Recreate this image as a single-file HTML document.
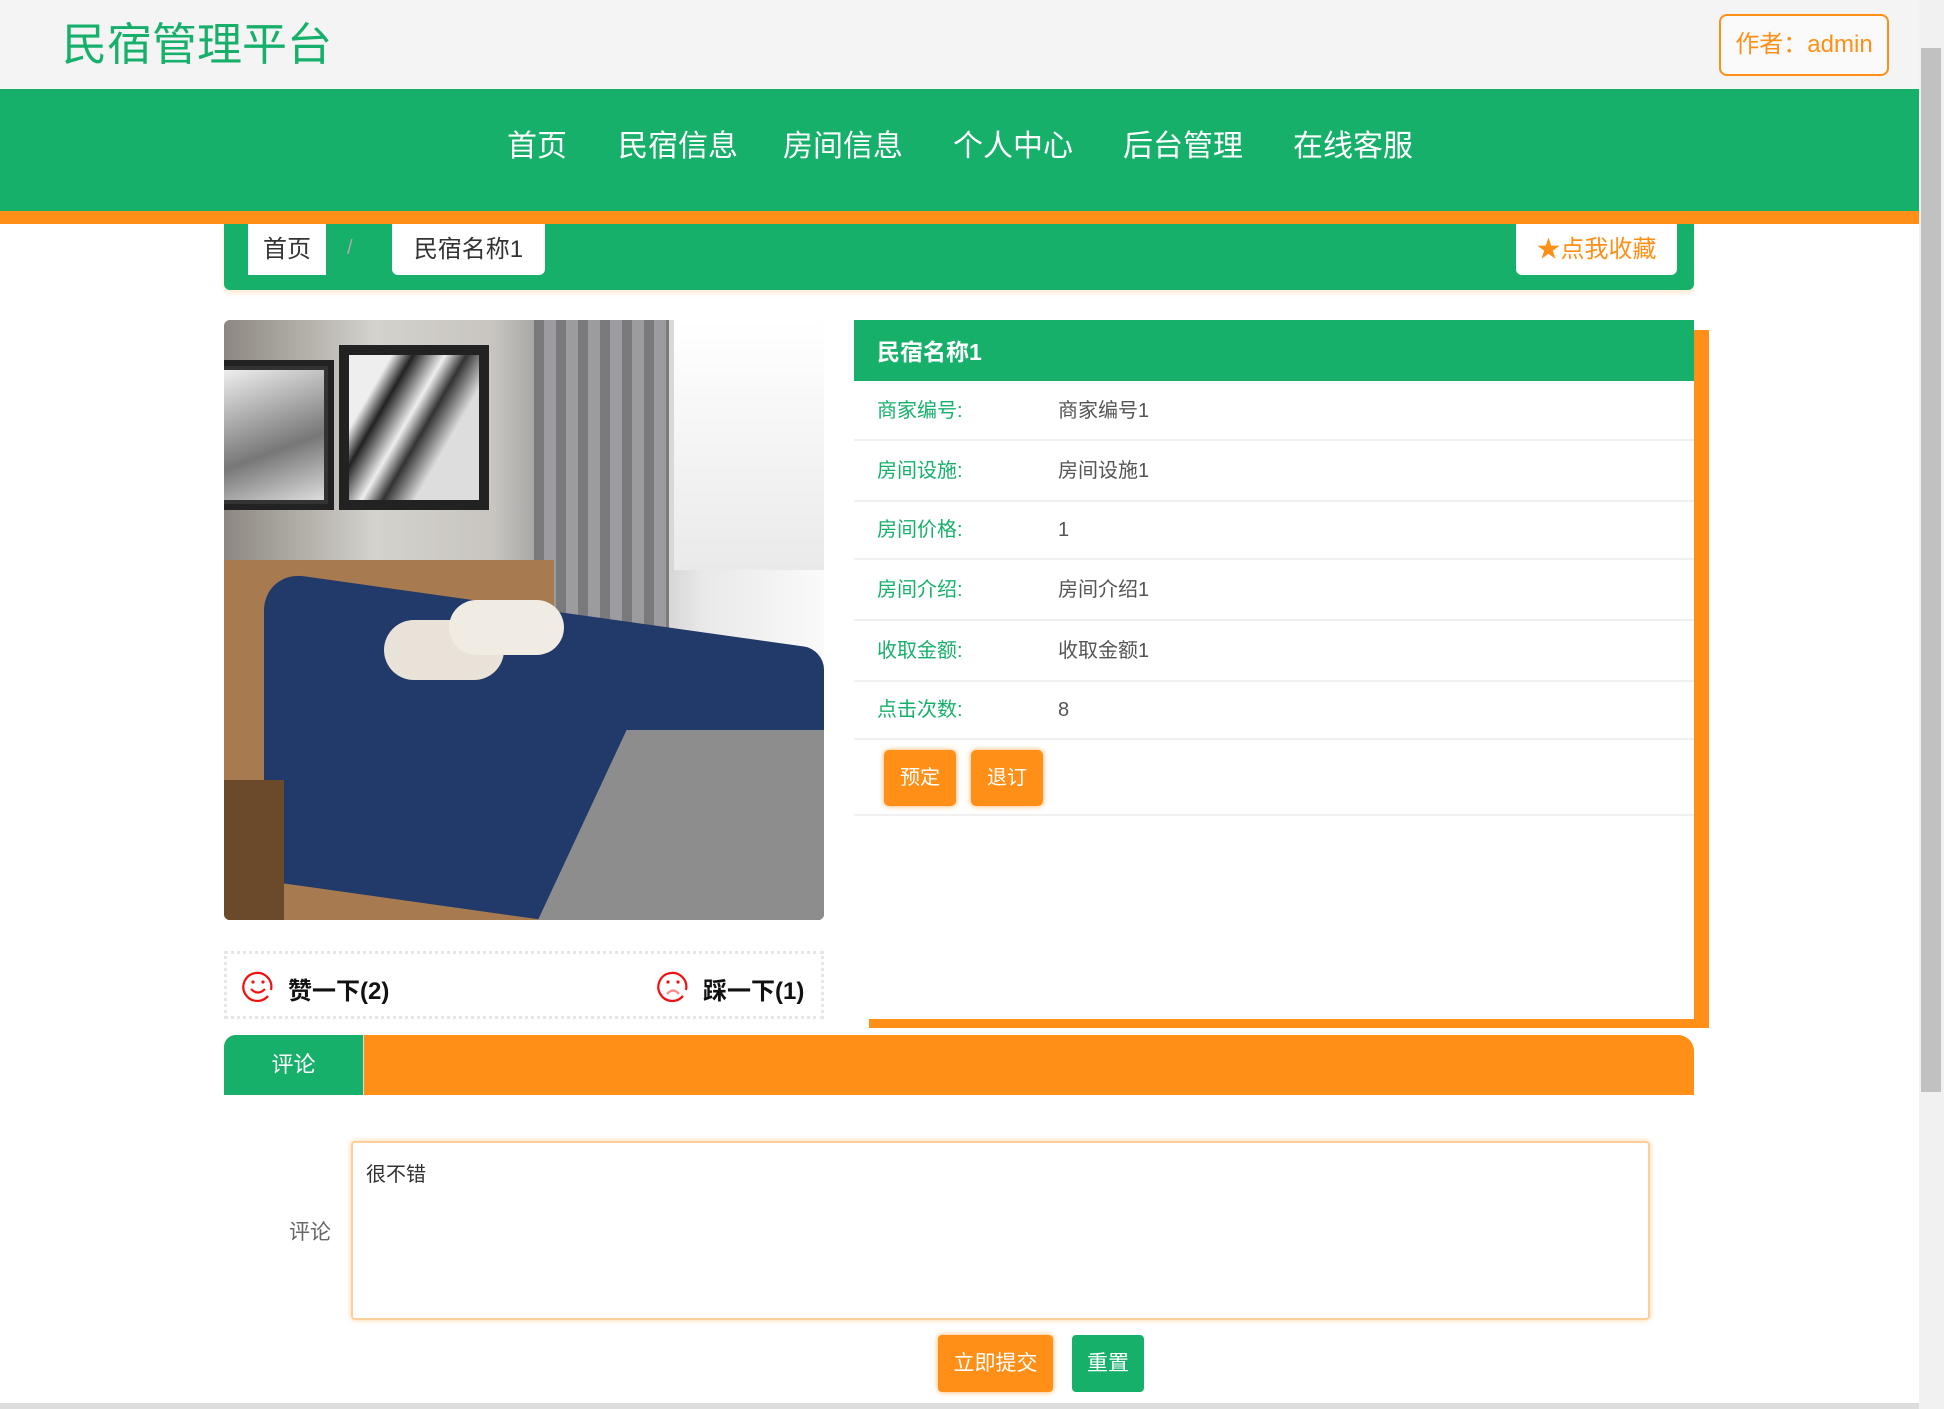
<!DOCTYPE html>
<html><head><meta charset="utf-8"><style>
*{margin:0;padding:0;box-sizing:border-box}
body{width:1944px;height:1409px;overflow:hidden;background:#fff;font-family:"Liberation Sans","Noto Sans CJK SC",sans-serif;position:relative}
.a{position:absolute}
.g{background:#17b06b}.o{background:#ff8f16}
.r span{line-height:24px}
</style></head><body>
<div class="a" style="left:0;top:0;width:1919px;height:89px;background:#f4f4f4"></div>
<div class="a" style="left:62px;top:16px;font-size:45px;color:#17b06b;line-height:58px">民宿管理平台</div>
<div class="a" style="left:1719px;top:14px;width:170px;height:62px;border:2px solid #ff8f16;border-radius:8px;color:#ff8f16;font-size:24px;line-height:58px;text-align:center;background:#fafafa">作者：admin</div>
<div class="a g" style="left:0;top:89px;width:1919px;height:122px"></div>
<div class="a o" style="left:0;top:211px;width:1919px;height:13px"></div>
<div class="a" style="left:507px;top:125px;font-size:30px;color:#fff;line-height:44px;white-space:nowrap">
<span style="margin-right:51px">首页</span><span style="margin-right:45px">民宿信息</span><span style="margin-right:50px">房间信息</span><span style="margin-right:50px">个人中心</span><span style="margin-right:50px">后台管理</span><span>在线客服</span></div>
<div class="a" style="left:1919px;top:0;width:25px;height:1409px;background:#f1f1f1"></div>
<div class="a" style="left:1921px;top:48px;width:20px;height:1044px;background:#c1c1c1"></div>
<div class="a" style="left:0;top:1403px;width:1919px;height:6px;background:#ddd"></div>
<div class="a g" style="left:224px;top:224px;width:1470px;height:66px;border-radius:0 0 6px 6px;box-shadow:0 3px 6px rgba(255,140,20,.2)"></div>
<div class="a" style="left:248px;top:224px;width:78px;height:51px;background:#fff;font-size:24px;line-height:51px;text-align:center;color:#333">首页</div>
<div class="a" style="left:347px;top:237px;color:#aaa;font-size:20px">/</div>
<div class="a" style="left:392px;top:224px;width:153px;height:51px;background:#fff;border-radius:0 0 6px 6px;font-size:24px;line-height:51px;text-align:center;color:#333">民宿名称1</div>
<div class="a" style="left:1516px;top:224px;width:161px;height:51px;background:#fff;border-radius:0 0 6px 6px;font-size:24px;line-height:51px;text-align:center;color:#ff8f16">★点我收藏</div>
<div class="a" style="left:224px;top:320px;width:600px;height:600px;border-radius:6px;overflow:hidden;background:#c9c6c0">
<div class="a" style="left:0;top:0;width:600px;height:600px;background:linear-gradient(90deg,#8c8780 0%,#d4d2cd 25%,#c8c5c0 45%,#9a9a9a 55%,#e9e9e9 80%,#fafafa 100%)"></div>
<div class="a" style="left:-10px;top:40px;width:120px;height:150px;background:#333;border:6px solid #222"></div>
<div class="a" style="left:0;top:50px;width:100px;height:130px;background:linear-gradient(160deg,#eee,#777 60%,#ddd)"></div>
<div class="a" style="left:115px;top:25px;width:150px;height:165px;background:#222"></div>
<div class="a" style="left:125px;top:35px;width:130px;height:145px;background:linear-gradient(120deg,#eee 20%,#222 30%,#eee 45%,#333 55%,#ddd 70%)"></div>
<div class="a" style="left:310px;top:0;width:135px;height:420px;background:repeating-linear-gradient(90deg,#7a7a7c 0 10px,#9c9ca0 10px 22px)"></div>
<div class="a" style="left:450px;top:0;width:150px;height:250px;background:linear-gradient(180deg,#fff,#eaeaea)"></div>
<div class="a" style="left:0;top:240px;width:330px;height:360px;background:#a87a50"></div>
<div class="a" style="left:40px;top:290px;width:560px;height:310px;background:#223a6a;border-radius:40px 20px 0 0;transform:skewY(8deg)"></div>
<div class="a" style="left:160px;top:300px;width:120px;height:60px;background:#e8e2d8;border-radius:30px"></div>
<div class="a" style="left:225px;top:280px;width:115px;height:55px;background:#f0ebe3;border-radius:30px"></div>
<div class="a" style="left:300px;top:410px;width:320px;height:220px;background:#8d8d8d;transform:skewX(-25deg);transform-origin:bottom"></div>
<div class="a" style="left:0;top:460px;width:60px;height:140px;background:#6b4a2c"></div>
</div>
<div class="a o" style="left:869px;top:330px;width:840px;height:698px"></div>
<div class="a" style="left:854px;top:320px;width:840px;height:699px;background:#fff"></div>
<div class="a g" style="left:854px;top:320px;width:840px;height:61px"></div>
<div class="a" style="left:877px;top:320px;color:#fff;font-size:23px;font-weight:bold;line-height:64px">民宿名称1</div>
<div class="a r" style="left:854px;top:381px;width:840px;font-size:20px">
<div style="height:60px;border-bottom:2px solid #f0f0f0;position:relative"><span class="a" style="left:23px;top:18px;color:#17b06b">商家编号:</span><span class="a" style="left:204px;top:18px;color:#555">商家编号1</span></div>
<div style="height:61px;border-bottom:2px solid #f0f0f0;position:relative"><span class="a" style="left:23px;top:18px;color:#17b06b">房间设施:</span><span class="a" style="left:204px;top:18px;color:#555">房间设施1</span></div>
<div style="height:58px;border-bottom:2px solid #f0f0f0;position:relative"><span class="a" style="left:23px;top:16px;color:#17b06b">房间价格:</span><span class="a" style="left:204px;top:16px;color:#555">1</span></div>
<div style="height:61px;border-bottom:2px solid #f0f0f0;position:relative"><span class="a" style="left:23px;top:18px;color:#17b06b">房间介绍:</span><span class="a" style="left:204px;top:18px;color:#555">房间介绍1</span></div>
<div style="height:61px;border-bottom:2px solid #f0f0f0;position:relative"><span class="a" style="left:23px;top:18px;color:#17b06b">收取金额:</span><span class="a" style="left:204px;top:18px;color:#555">收取金额1</span></div>
<div style="height:58px;border-bottom:2px solid #f0f0f0;position:relative"><span class="a" style="left:23px;top:16px;color:#17b06b">点击次数:</span><span class="a" style="left:204px;top:16px;color:#555">8</span></div>
<div style="height:76px;border-bottom:2px solid #f0f0f0;position:relative">
<span class="a o" style="left:30px;top:10px;width:72px;height:56px;border-radius:5px;color:#fff;line-height:56px;text-align:center;box-shadow:0 0 6px #ffb060">预定</span>
<span class="a o" style="left:117px;top:10px;width:72px;height:56px;border-radius:5px;color:#fff;line-height:56px;text-align:center;box-shadow:0 0 6px #ffb060">退订</span></div>
</div>
<div class="a" style="left:224px;top:951px;width:600px;height:68px;border:3px dotted #e6e6e6"></div>
<svg class="a" style="left:242px;top:970px" width="32" height="32" viewBox="0 0 32 32" fill="none" stroke="#f01010" stroke-width="2.2"><path d="M26 26A14 14 0 1 1 29 20"/><circle cx="11" cy="12" r="1.6" fill="#f01010" stroke="none"/><circle cx="21" cy="12" r="1.6" fill="#f01010" stroke="none"/><path d="M9 19q7 7 14 0"/></svg>
<div class="a" style="left:288px;top:971px;font-size:24px;font-weight:bold;color:#111">赞一下(2)</div>
<svg class="a" style="left:657px;top:970px" width="32" height="32" viewBox="0 0 32 32" fill="none" stroke="#f01010" stroke-width="2.2"><path d="M26 26A14 14 0 1 1 29 20"/><circle cx="11" cy="12" r="1.6" fill="#f01010" stroke="none"/><circle cx="21" cy="12" r="1.6" fill="#f01010" stroke="none"/><path d="M10 24q6-7 12 0" stroke="#f88"/></svg>
<div class="a" style="left:703px;top:971px;font-size:24px;font-weight:bold;color:#111">踩一下(1)</div>
<div class="a o" style="left:224px;top:1035px;width:1470px;height:60px;border-radius:12px 16px 0 0"></div>
<div class="a g" style="left:224px;top:1035px;width:140px;height:60px;border-radius:12px 0 0 0;border-right:1px solid #ddd;color:#fff;font-size:22px;line-height:60px;text-align:center">评论</div>
<div class="a" style="left:289px;top:1216px;font-size:21px;color:#666">评论</div>
<div class="a" style="left:351px;top:1141px;width:1299px;height:179px;border:2px solid #ffcf9a;border-radius:4px;box-shadow:0 0 6px rgba(255,143,22,.4)"></div>
<div class="a" style="left:366px;top:1158px;font-size:20px;color:#333">很不错</div>
<div class="a o" style="left:938px;top:1335px;width:115px;height:57px;border-radius:4px;color:#fff;font-size:21px;line-height:57px;text-align:center;box-shadow:0 0 6px #ffb060">立即提交</div>
<div class="a g" style="left:1072px;top:1335px;width:72px;height:57px;border-radius:4px;color:#fff;font-size:21px;line-height:57px;text-align:center">重置</div>
</body></html>
